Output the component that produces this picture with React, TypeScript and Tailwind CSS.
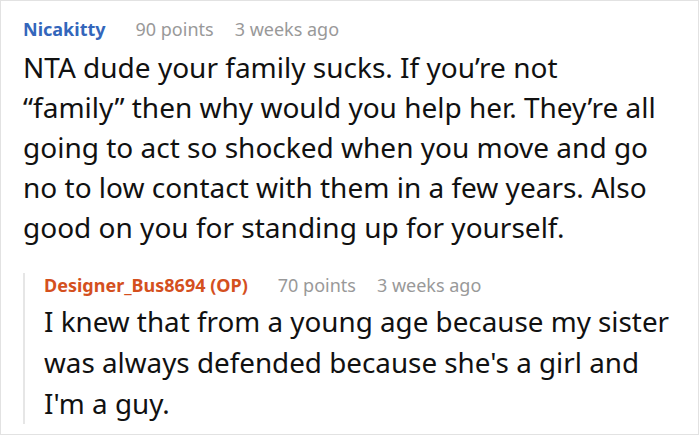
import React from "react";

type CommentProps = {
  author: string;
  authorClass: string;
  points: string;
  time: string;
  body: string;
};

function CommentHead({ author, authorClass, points, time }: Omit<CommentProps, "body">) {
  return (
    <div className="flex items-baseline text-[18px] leading-[24px]">
      <span className={`font-bold ${authorClass} mr-[30px]`}>{author}</span>
      <span className="text-[#999999] mr-[21px]">{points}</span>
      <span className="text-[#999999]">{time}</span>
    </div>
  );
}

export default function App() {
  return (
    <div
      className="w-[699px] h-[435px] border border-[#e2e2e2] bg-white overflow-hidden text-[#111111]"
      style={{ fontFamily: '"Noto Sans", "Open Sans", sans-serif' }}
    >
      <div className="pl-[22px] pr-[22px] pt-[16px]">
        <CommentHead
          author="Nicakitty"
          authorClass="text-[#3366bb]"
          points="90 points"
          time="3 weeks ago"
        />
        <p className="mt-[6px] pr-[10px] text-[28px] leading-[40px]">
          NTA dude your family sucks. If you’re not “family” then why would you help her. They’re all going to act so shocked when you move and go no to low contact with them in a few years. Also good on you for standing up for yourself.
        </p>

        <div className="mt-[26px] border-l-2 border-[#e6e6e6] pl-[19px]">
          <CommentHead
            author="Designer_Bus8694 (OP)"
            authorClass="text-[#d4501e]"
            points="70 points"
            time="3 weeks ago"
          />
          <p className="mt-[4px] text-[27.8px] leading-[41px]">
            I knew that from a young age because my sister was always defended because she's a girl and I'm a guy.
          </p>
        </div>
      </div>
    </div>
  );
}
